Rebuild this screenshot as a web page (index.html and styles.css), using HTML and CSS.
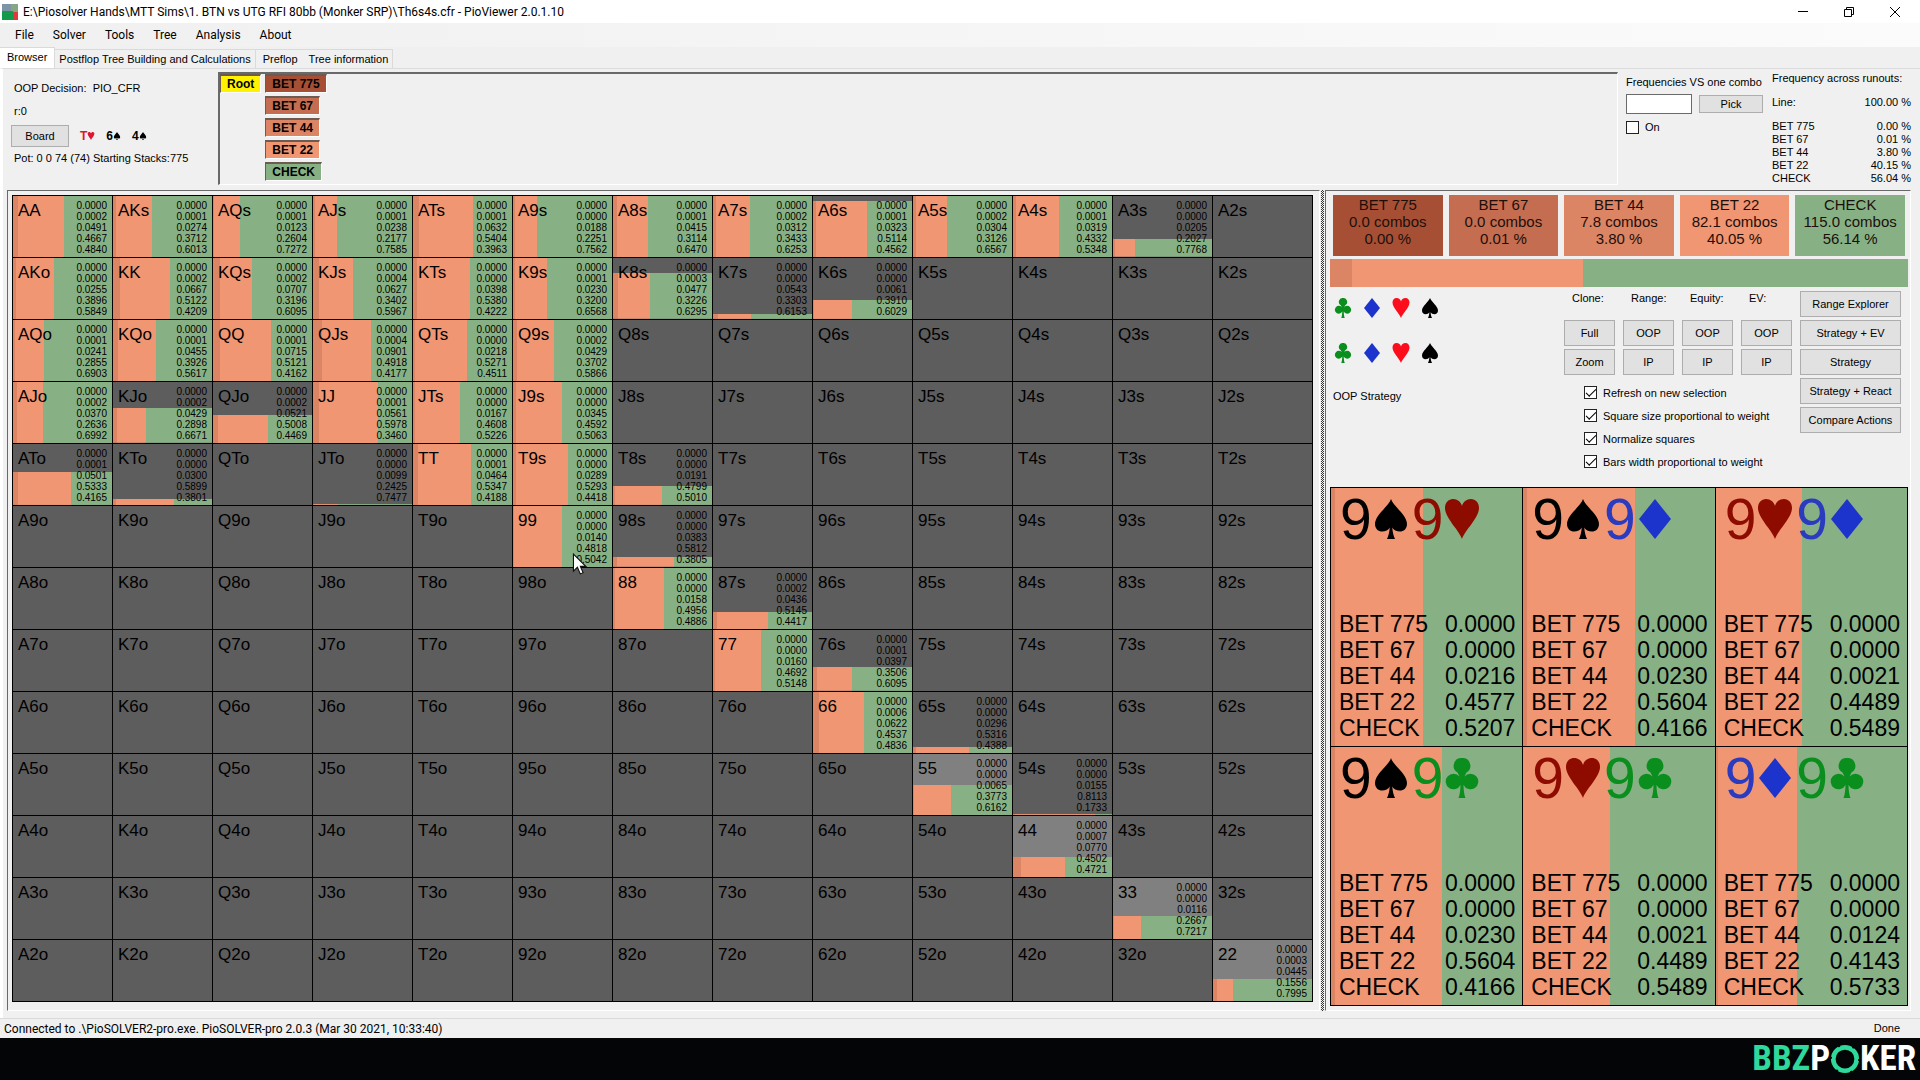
FILE: index.html
```html
<!DOCTYPE html>
<html lang="en">
<head>
<meta charset="utf-8">
<title>PioViewer 2.0.1.10</title>
<link rel="stylesheet" href="styles.css">
</head>
<body>
<svg class="defs" aria-hidden="true">
  <symbol id="spade" viewBox="0 0 34 40"><path d="M17 0C19 7 33 16 33 25C33 30 29.500 32.500 26 32.500C22.500 32.500 19.500 31 18.300 28.500C18.500 33 19.500 37 21 40H13C14.500 37 15.500 33 15.700 28.500C14.500 31 11.500 32.500 8 32.500C4.500 32.500 1 30 1 25C1 16 15 7 17 0Z"/></symbol>
  <symbol id="heart" viewBox="0 0 34 40"><path d="M17 40C14 31 0 19 0 9C0 3.500 3.500 0 8 0C12.500 0 16 3 17 7C18 3 21.500 0 26 0C30.500 0 34 3.500 34 9C34 19 20 31 17 40Z"/></symbol>
  <symbol id="diamond" viewBox="0 0 34 40"><path d="M17 0L33 20L17 40L1 20Z"/></symbol>
  <symbol id="club" viewBox="0 0 34 40"><path d="M17 0A7.800 7.800 0 0 1 21.500 14.500L19.500 18.500A7.800 7.800 0 1 1 18.500 27C18.600 32 19.200 37 20.500 40H13.500C14.800 37 15.400 32 15.500 27A7.800 7.800 0 1 1 14.500 18.500L12.500 14.500A7.800 7.800 0 0 1 17 0Z"/></symbol>
</svg>

<div class="window">
  <header class="titlebar">
    <svg class="app-icon" viewBox="0 0 16 16" aria-hidden="true"><path fill="#7d93a6" d="M0 0h9v8H0z"/><path fill="#86a784" d="M9 0h7v9H9z"/><path fill="#139a4b" d="M0 7h11v9H0z"/><path fill="#e0393c" d="M11 8h5v8h-5z"/></svg>
    <h1 class="title">E:\Piosolver Hands\MTT Sims\1. BTN vs UTG RFI 80bb (Monker SRP)\Th6s4s.cfr - PioViewer 2.0.1.10</h1>
    <div class="window-buttons">
      <button class="win-btn" type="button" aria-label="Minimize"><svg viewBox="0 0 12 12"><path d="M1 5.500h10"/></svg></button>
      <button class="win-btn" type="button" aria-label="Restore"><svg viewBox="0 0 12 12"><path d="M1.500 3.500h7v7h-7zM3.500 3.500v-2h7v7h-2"/></svg></button>
      <button class="win-btn" type="button" aria-label="Close"><svg viewBox="0 0 12 12"><path d="M1 1l10 10M11 1L1 11"/></svg></button>
    </div>
  </header>

  <nav class="menubar">
    <button type="button">File</button><button type="button">Solver</button><button type="button">Tools</button><button type="button">Tree</button><button type="button">Analysis</button><button type="button">About</button>
  </nav>

  <div class="tabs" role="tablist">
    <button type="button" role="tab" aria-selected="true" class="tab active">Browser</button>
    <button type="button" role="tab" class="tab">Postflop Tree Building and Calculations</button>
    <button type="button" role="tab" class="tab divided">Preflop</button>
    <button type="button" role="tab" class="tab last">Tree information</button>
  </div>

  <main class="page">
    <section class="top">
      <div class="decision">
        <p>OOP Decision:&nbsp; PIO_CFR</p>
        <p>r:0</p>
        <div class="board">
          <button type="button" class="btn board-btn">Board</button>
          <span class="card red">T<svg><use href="#heart"/></svg></span>
          <span class="card">6<svg><use href="#spade"/></svg></span>
          <span class="card">4<svg><use href="#spade"/></svg></span>
        </div>
        <p>Pot: 0 0 74 (74) Starting Stacks:775</p>
      </div>
      <div class="tree">
        <button type="button" class="node root">Root</button>
        <div class="branches">
          <button type="button" class="node bet775">BET 775</button>
          <button type="button" class="node bet67">BET 67</button>
          <button type="button" class="node bet44">BET 44</button>
          <button type="button" class="node bet22">BET 22</button>
          <button type="button" class="node check">CHECK</button>
        </div>
      </div>
      <div class="versus">
        <label for="combo">Frequencies VS one combo</label>
        <div class="pick-row">
          <input id="combo" class="combo" type="text">
          <button type="button" class="btn pick">Pick</button>
        </div>
        <label class="tick"><input type="checkbox">On</label>
      </div>
      <table class="runouts">
        <caption>Frequency across runouts:</caption>
        <tbody>
          <tr class="line"><th scope="row">Line:</th><td>100.00 %</td></tr>
          <tr><th scope="row">BET 775</th><td>0.00 %</td></tr>
          <tr><th scope="row">BET 67</th><td>0.01 %</td></tr>
          <tr><th scope="row">BET 44</th><td>3.80 %</td></tr>
          <tr><th scope="row">BET 22</th><td>40.15 %</td></tr>
          <tr><th scope="row">CHECK</th><td>56.04 %</td></tr>
        </tbody>
      </table>
    </section>

    <section class="workspace">
      <div class="panel range-panel">
        <table class="range"><tbody id="range"></tbody></table>
        <svg class="cursor" viewBox="0 0 13 20" aria-hidden="true"><path d="M1 1V16.500L4.600 13L7.200 19L9.800 17.900L7.300 12.200H12.200Z" fill="#fff" stroke="#111" stroke-width="1"/></svg>
      </div>
      <div class="splitter"></div>
      <div class="panel side-panel">
        <div class="tiles">
          <button type="button" class="tile bet775">BET 775<br>0.0 combos<br>0.00 %</button>
          <button type="button" class="tile bet67">BET 67<br>0.0 combos<br>0.01 %</button>
          <button type="button" class="tile bet44">BET 44<br>7.8 combos<br>3.80 %</button>
          <button type="button" class="tile bet22">BET 22<br>82.1 combos<br>40.05 %</button>
          <button type="button" class="tile check">CHECK<br>115.0 combos<br>56.14 %</button>
        </div>
        <div class="total"><i class="bet44" style="width:3.8%"></i><i class="bet22" style="width:40.05%"></i><i class="check" style="width:56.15%"></i></div>

        <div class="controls">
          <div class="filters">
            <div class="suits">
              <svg class="c"><use href="#club"/></svg><svg class="d"><use href="#diamond"/></svg><svg class="h"><use href="#heart"/></svg><svg class="s"><use href="#spade"/></svg>
            </div>
            <div class="suits">
              <svg class="c"><use href="#club"/></svg><svg class="d"><use href="#diamond"/></svg><svg class="h"><use href="#heart"/></svg><svg class="s"><use href="#spade"/></svg>
            </div>
            <p>OOP Strategy</p>
          </div>
          <div class="views">
            <div class="view-grid">
              <span>Clone:</span><span>Range:</span><span>Equity:</span><span>EV:</span>
              <button type="button" class="btn">Full</button><button type="button" class="btn">OOP</button><button type="button" class="btn">OOP</button><button type="button" class="btn">OOP</button>
              <button type="button" class="btn">Zoom</button><button type="button" class="btn">IP</button><button type="button" class="btn">IP</button><button type="button" class="btn">IP</button>
            </div>
            <div class="options">
              <label class="tick"><input type="checkbox" checked>Refresh on new selection</label>
              <label class="tick"><input type="checkbox" checked>Square size proportional to weight</label>
              <label class="tick"><input type="checkbox" checked>Normalize squares</label>
              <label class="tick"><input type="checkbox" checked>Bars width proportional to weight</label>
            </div>
          </div>
          <div class="modes">
            <button type="button" class="btn">Range Explorer</button>
            <button type="button" class="btn">Strategy + EV</button>
            <button type="button" class="btn">Strategy</button>
            <button type="button" class="btn">Strategy + React</button>
            <button type="button" class="btn">Compare Actions</button>
          </div>
        </div>

        <div class="hands" id="hands"></div>
      </div>
    </section>
  </main>

  <footer class="status"><span>Connected to .\PioSOLVER2-pro.exe. PioSOLVER-pro 2.0.3 (Mar 30 2021, 10:33:40)</span><span class="done">Done</span></footer>
</div>

<div class="brand">
  <span class="brand-green">BBZ</span><span>P</span><svg class="chip" viewBox="0 0 32 32" role="img" aria-label="O"><circle cx="16" cy="16" r="12.500" fill="none" stroke="#2fd89b" stroke-width="5"/><circle cx="16" cy="16" r="15" fill="none" stroke="#040507" stroke-width="2" stroke-dasharray="2 13.700"/></svg><span>KER</span>
</div>
<script src="script.js"></script>
</body>
</html>
```
FILE: styles.css
```css
* { box-sizing: border-box; }

body {
  margin: 0;
  min-height: 100vh;
  display: flex;
  flex-direction: column;
  background: #040507;
  color: #000;
  font: 11px/14px "Liberation Sans", Arial, sans-serif;
}

p, h1 { margin: 0; font-weight: normal; }
button, input { font: inherit; color: inherit; margin: 0; }
button { padding: 0; border: 0; background: none; }
table { border-collapse: separate; border-spacing: 0; }
th, td { padding: 0; font-weight: normal; text-align: left; }
.defs { display: none; }

.bet775 { background: #a74f35; }
.bet67 { background: #c46d50; }
.bet44 { background: #dc8565; }
.bet22 { background: #f09672; }
.check { background: #87b185; }

.window { background: #f0f0f0; }

/* title bar, menu, tabs */
.titlebar {
  display: flex;
  align-items: center;
  height: 23px;
  padding: 0 12px 0 2px;
  background: #fff;
}
.app-icon { width: 16px; height: 16px; margin-right: 5px; }
.title { flex: 1; font: 12px/16px Roboto, sans-serif; }
.window-buttons { display: flex; gap: 20px; }
.win-btn { width: 26px; height: 20px; display: grid; place-items: center; }
.win-btn svg { width: 12px; height: 12px; fill: none; stroke: #000; }

.menubar {
  display: flex;
  gap: 19px;
  height: 24px;
  padding-left: 15px;
  background: linear-gradient(90deg, #f0f0f0, #fbfbfb);
  font: 12px/24px Roboto, sans-serif;
}

.tabs { display: flex; height: 21px; align-items: flex-end; }
.tab {
  height: 19px;
  padding: 0 4px;
  border-top: 1px solid #dadada;
}
.tab.active {
  height: 21px;
  padding: 0 7px 2px;
  background: #fff;
  border-right: 1px solid #dadada;
}
.tab.divided { border-left: 1px solid #dadada; padding: 0 7px; }
.tab.last { border-right: 1px solid #dadada; }

.page {
  border-top: 1px solid #dcdcdc;
  border-left: 3px solid #fff;
  padding: 3px 9px 7px 4px;
}

/* decision strip */
.top { display: flex; height: 118px; }
.decision {
  width: 211px;
  padding: 9px 0 0 7px;
}
.decision p { margin-bottom: 9px; }
.board {
  display: flex;
  align-items: center;
  gap: 11px;
  margin: -2px 0 4px -3px;
  height: 22px;
}
.btn {
  height: 26px;
  background: #e1e1e1;
  border: 1px solid #adadad;
}
.board-btn { width: 58px; height: 22px; }
.card {
  display: flex;
  align-items: center;
  font: bold 12px/14px "Liberation Sans", Arial, sans-serif;
}
.card svg { width: 8px; height: 8px; }
.red { color: #e0142c; fill: #e0142c; }

.tree {
  flex: 1;
  display: flex;
  align-items: flex-start;
  gap: 4px;
  height: 113px;
  border: 1px solid #fff;
  border-top: 2px solid #696969;
  border-left: 2px solid #696969;
}
.node {
  height: 19px;
  padding: 0 6px;
  border: 1px solid #fff;
  border-top: 2px solid #6b5b50;
  border-left: 1px solid #6b5b50;
  font: bold 12px/14px "Liberation Sans", Arial, sans-serif;
}
.root { background: #fff200; }
.branches {
  display: flex;
  flex-direction: column;
  align-items: flex-start;
  gap: 3px;
}

.versus { width: 146px; padding: 3px 0 0 8px; }
.pick-row { display: flex; align-items: center; gap: 7px; margin: 5px 0 6px; }
.combo {
  width: 66px;
  height: 20px;
  padding: 0 4px;
  border: 1px solid #6a6a6a;
  background: #fff;
}
.pick { width: 64px; height: 18px; }

.tick { display: flex; align-items: center; gap: 6px; }
.tick input {
  appearance: none;
  width: 13px;
  height: 13px;
  border: 1px solid #222;
  background: #fff;
  display: grid;
  place-items: center;
}
.tick input:checked::before {
  content: "";
  width: 9px;
  height: 4px;
  border-left: 1px solid #000;
  border-bottom: 1px solid #000;
  transform: translateY(-1px) rotate(-45deg);
}

.runouts { width: 139px; margin: -1px 0 0 8px; align-self: flex-start; }
.runouts caption { text-align: left; white-space: nowrap; line-height: 14px; }
.runouts th, .runouts td { line-height: 13px; height: 13px; }
.runouts td { text-align: right; }
.runouts .line th, .runouts .line td { height: 35px; }

/* workspace */
.workspace {
  display: grid;
  grid-template-columns: minmax(0, 1fr) 3px 586px;
  column-gap: 1px;
}
.panel {
  border: 1px solid #fff;
  border-top-color: #696969;
  border-left-color: #696969;
}
.range-panel { position: relative; padding: 4px 6px 7px 4px; }
.splitter {
  background: repeating-conic-gradient(#333 0 25%, #eee 0 50%) 0 0 / 2px 2px;
}

.range {
  width: 100%;
  table-layout: fixed;
  border-top: 1px solid #000;
  border-left: 1px solid #000;
  background: #5d5d5d;
}
.range td {
  height: 62px;
  border-right: 1px solid #000;
  border-bottom: 1px solid #000;
}
.range td.picked { background: #808080; }
.cell {
  display: flex;
  justify-content: space-between;
  height: 61px;
  padding: 4px 5px 0 5px;
  background-repeat: no-repeat;
  background-position: left bottom;
}
.hand { font-size: 17px; line-height: 22px; }
.freqs { font-size: 10px; line-height: 11px; text-align: right; white-space: pre-line; }

.cursor {
  position: absolute;
  left: 43%;
  top: 362px;
  width: 15px;
  height: 22px;
}

/* side panel */
.side-panel { padding: 4px 2px 4px 4px; }
.tiles { display: flex; gap: 6px; padding: 0 3px; margin-bottom: 3px; }
.tile {
  flex: 1;
  height: 61px;
  padding-bottom: 8px;
  font-size: 15px;
  line-height: 17px;
  color: #1c0f0a;
  white-space: nowrap;
}
.total { display: flex; height: 28px; }

.controls { display: flex; height: 200px; gap: 8px; padding: 4px 7px 0 3px; }
.filters { flex: 1; }
.suits { display: flex; gap: 11px; padding: 7px 0 0 1px; height: 45px; }
.suits svg { width: 18px; height: 20px; }
.filters p { padding-top: 8px; }
.c { fill: #0a8f1e; }
.d { fill: #1c34cc; }
.h { fill: #fb0d1b; }
.s { fill: #000; }

.view-grid {
  display: grid;
  grid-template-columns: repeat(4, 51px);
  grid-template-rows: 26px 26px 26px;
  gap: 3px 8px;
}
.view-grid span { padding-left: 8px; }
.view-grid .btn { width: 51px; }
.options { padding: 6px 0 0 20px; }
.options .tick { height: 23px; }

.modes { display: flex; flex-direction: column; gap: 3px; width: 101px; }

.hands {
  display: grid;
  grid-template-columns: repeat(3, 1fr);
  border-top: 1px solid #000;
  border-left: 1px solid #000;
}
.combo-card {
  height: 259px;
  display: flex;
  flex-direction: column;
  justify-content: space-between;
  padding: 0 7px 5px 8px;
  border-right: 1px solid #000;
  border-bottom: 1px solid #000;
  font-size: 23px;
  line-height: 26px;
}
.cards { display: flex; align-items: center; font-size: 57px; line-height: 62px; padding-left: 1px; }
.cards svg { width: 34px; height: 40px; margin: 0 4px 0 2px; }
.cards .c { color: #0a8f1e; }
.cards .d { color: #2b3bc0; }
.cards .h { color: #8e0b00; fill: #8e0b00; }
.cards span { display: flex; align-items: center; }
.combo-card table { width: 100%; }
.combo-card td { text-align: right; }

/* status and brand */
.status {
  display: flex;
  justify-content: space-between;
  height: 20px;
  padding: 0 20px 0 4px;
  border-top: 1px solid #dadada;
  font: 12px/20px Roboto, sans-serif;
}
.done { font: 11px/18px "Liberation Sans", Arial, sans-serif; }

.brand {
  flex: 1;
  display: flex;
  justify-content: flex-end;
  align-items: center;
  min-height: 42px;
  padding-right: 4px;
  color: #fff;
  font: bold 35px/42px "Liberation Sans Narrow", "Roboto Condensed", "Liberation Sans", sans-serif;
}
.brand-green { color: #2fd89b; }
.chip { width: 30px; height: 32px; }
```
FILE: script.js
```js
// Frequencies per hand in 1/10000: BET 775, BET 67, BET 44, BET 22, CHECK, then weight in % when below 100.
const freqs = {
  AA: [0, 2, 491, 4667, 4840], AKs: [0, 1, 274, 3712, 6013], AQs: [0, 1, 123, 2604, 7272],
  AJs: [0, 1, 238, 2177, 7585], ATs: [0, 1, 632, 5404, 3963], A9s: [0, 0, 188, 2251, 7562],
  A8s: [0, 1, 415, 3114, 6470], A7s: [0, 2, 312, 3433, 6253], A6s: [0, 1, 323, 5114, 4562, 92],
  A5s: [0, 2, 304, 3126, 6567], A4s: [0, 1, 319, 4332, 5348], A3s: [0, 0, 205, 2027, 7768, 29],
  AKo: [0, 0, 255, 3896, 5849], KK: [0, 2, 667, 5122, 4209], KQs: [0, 2, 707, 3196, 6095],
  KJs: [0, 4, 627, 3402, 5967], KTs: [0, 0, 398, 5380, 4222], K9s: [0, 1, 230, 3200, 6568],
  K8s: [0, 3, 477, 3226, 6295, 75], K7s: [0, 0, 543, 3303, 6153, 8], K6s: [0, 0, 61, 3910, 6029, 31],
  AQo: [0, 1, 241, 2855, 6903], KQo: [0, 1, 455, 3926, 5617], QQ: [0, 1, 715, 5121, 4162],
  QJs: [0, 4, 901, 4918, 4177], QTs: [0, 0, 218, 5271, 4511], Q9s: [0, 2, 429, 3702, 5866],
  AJo: [0, 2, 370, 2636, 6992], KJo: [0, 2, 429, 2898, 6671, 57], QJo: [0, 2, 521, 5008, 4469, 46],
  JJ: [0, 1, 561, 5978, 3460], JTs: [0, 0, 167, 4608, 5226], J9s: [0, 0, 345, 4592, 5063],
  ATo: [0, 1, 501, 5333, 4165, 54], KTo: [0, 0, 300, 5899, 3801, 10], JTo: [0, 0, 99, 2425, 7477, 1.5],
  TT: [0, 1, 464, 5347, 4188], T9s: [0, 0, 289, 5293, 4418], T8s: [0, 0, 191, 4799, 5010, 31],
  99: [0, 0, 140, 4818, 5042], "98s": [0, 0, 383, 5812, 3805, 16],
  88: [0, 0, 158, 4956, 4886], "87s": [0, 2, 436, 5145, 4417, 28],
  77: [0, 0, 160, 4692, 5148], "76s": [0, 1, 397, 3506, 6095, 39],
  66: [0, 6, 622, 4537, 4836], "65s": [0, 0, 296, 5316, 4388, 10],
  55: [0, 0, 65, 3773, 6162, 50], "54s": [0, 0, 155, 8113, 1733, 1.5],
  44: [0, 7, 770, 4502, 4721, 33], 33: [0, 0, 116, 2667, 7217, 38], 22: [0, 3, 445, 1556, 7995, 36]
};
const picked = ["55", "44", "33", "22"];

function strip(f) {
  const a = f[2] / 100, b = a + f[3] / 100;
  return `linear-gradient(90deg,#dc8565 ${a}%,#f09672 ${a}% ${b}%,#87b185 ${b}%)`;
}
const show = v => (v / 10000).toFixed(4);

const ranks = "AKQJT98765432";
let rows = "";
for (let i = 0; i < 13; i++) {
  rows += "<tr>";
  for (let j = 0; j < 13; j++) {
    const hand = i === j ? ranks[i] + ranks[i]
      : j > i ? ranks[i] + ranks[j] + "s" : ranks[j] + ranks[i] + "o";
    const f = freqs[hand];
    const style = f ? ` style="background-image:${strip(f)};background-size:100% ${f[5] || 100}%"` : "";
    const nums = f ? `<span class="freqs">${f.slice(0, 5).map(show).join("\n")}</span>` : "";
    rows += `<td${picked.includes(hand) ? ' class="picked"' : ""}><div class="cell"${style}><span class="hand">${hand}</span>${nums}</div></td>`;
  }
  rows += "</tr>";
}
document.getElementById("range").innerHTML = rows;

const suitNames = { s: "spade", h: "heart", d: "diamond", c: "club" };
const actions = ["BET 775", "BET 67", "BET 44", "BET 22", "CHECK"];
const combos = [
  ["sh", [0, 0, 216, 4577, 5207]], ["sd", [0, 0, 230, 5604, 4166]], ["hd", [0, 0, 21, 4489, 5489]],
  ["sc", [0, 0, 230, 5604, 4166]], ["hc", [0, 0, 21, 4489, 5489]], ["dc", [0, 0, 124, 4143, 5733]]
];
document.getElementById("hands").innerHTML = combos.map(([suits, f]) =>
  `<div class="combo-card" style="background-image:${strip(f)}"><div class="cards">` +
  [...suits].map(s => `<span class="${s}">9<svg><use href="#${suitNames[s]}"/></svg></span>`).join("") +
  "</div><table>" +
  actions.map((a, k) => `<tr><th scope="row">${a}</th><td>${show(f[k])}</td></tr>`).join("") +
  "</table></div>").join("");
```
